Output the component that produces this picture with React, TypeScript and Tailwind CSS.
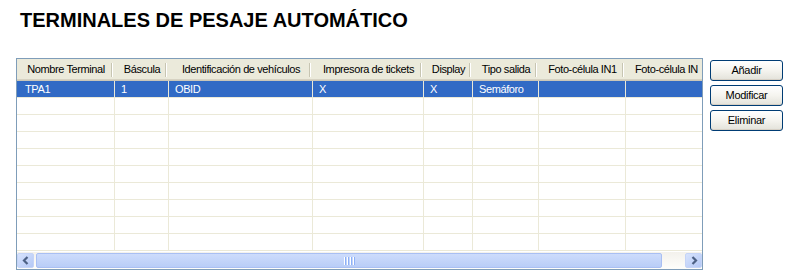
import React from "react";

const cols = [98, 54, 144, 111, 49, 66, 87, 87];
const headers = [
  "Nombre Terminal",
  "Báscula",
  "Identificación de vehículos",
  "Impresora de tickets",
  "Display",
  "Tipo salida",
  "Foto-célula IN1",
  "Foto-célula IN",
];
const firstRow = ["TPA1", "1", "OBID", "X", "X", "Semáforo", "", ""];

function Chevron({ dir }: { dir: "left" | "right" }) {
  return (
    <svg width="8" height="9" viewBox="0 0 8 9">
      {dir === "left" ? (
        <polyline points="5.5,1 2,4.5 5.5,8" fill="none" stroke="#4d6185" strokeWidth="2.2" />
      ) : (
        <polyline points="2.5,1 6,4.5 2.5,8" fill="none" stroke="#4d6185" strokeWidth="2.2" />
      )}
    </svg>
  );
}

function XPButton({ label }: { label: string }) {
  return (
    <div className="w-[73px] h-[21px] rounded-[3px] border border-[#003c74] bg-gradient-to-b from-[#ffffff] via-[#f5f4ef] to-[#e3e2da] flex items-center justify-center text-[11px] tracking-[-0.3px] text-black shadow-[inset_0_-1px_0_#d6d0c5]">
      {label}
    </div>
  );
}

export default function App() {
  const rows = Array.from({ length: 10 });
  return (
    <div
      className="w-[795px] h-[272px] bg-white overflow-hidden text-black"
      style={{ fontFamily: '"Liberation Sans", Arial, sans-serif' }}
    >
      <div className="pt-[9px] pl-[20px] text-[20px] leading-[23px] font-bold">
        TERMINALES DE PESAJE AUTOMÁTICO
      </div>
      <div className="flex mt-[26px] pl-[16px]">
        <div className="w-[687px] h-[212px] border border-[#7f9db9] flex flex-col overflow-hidden">
          {/* header */}
          <div className="flex flex-col shrink-0">
            <div className="h-[20px] bg-[#ebeadb] flex overflow-hidden">
              {headers.map((h, i) => (
                <div
                  key={i}
                  className={`relative shrink-0 flex items-center text-[11px] tracking-[-0.4px] whitespace-nowrap pt-[1px] ${
                    i === 7 ? "justify-start pl-[9px]" : "justify-center"
                  }`}
                  style={{ width: cols[i] }}
                >
                  {h}
                  {i < 7 && (
                    <div className="absolute right-[2px] top-[4px] h-[14px] w-[2px] border-l border-[#c7c5b2] border-r border-r-white" />
                  )}
                </div>
              ))}
            </div>
            <div className="h-px bg-[#d6d2c2]" />
            <div className="h-px bg-[#cbc7b8]" />
          </div>
          {/* body */}
          <div className="flex-1 overflow-hidden">
            {rows.map((_, r) => (
              <div
                key={r}
                className={`flex h-[17px] border-b border-[#ebe9d8] ${
                  r === 0 ? "bg-[#316ac5] text-white" : "bg-white"
                }`}
              >
                {cols.map((w, c) => (
                  <div
                    key={c}
                    className={`shrink-0 h-full border-r border-[#ebe9d8] flex items-center text-[11px] tracking-[-0.4px] whitespace-nowrap overflow-hidden ${
                      c === 0 ? "pl-[8px]" : "pl-[6px]"
                    }`}
                    style={{ width: w }}
                  >
                    {r === 0 ? firstRow[c] : ""}
                  </div>
                ))}
              </div>
            ))}
          </div>
          {/* scrollbar */}
          <div className="h-[17px] shrink-0 flex bg-gradient-to-b from-[#f3f1ec] to-[#fefefb] py-[1px]">
            <div className="w-[17px] h-full rounded-[2px] border border-[#c5d4f7] bg-gradient-to-br from-[#d7e3fd] to-[#b4c8f5] flex items-center justify-center">
              <Chevron dir="left" />
            </div>
            <div className="ml-[2px] w-[626px] h-full rounded-[2px] border border-[#a9bff3] bg-gradient-to-b from-[#cddcfc] to-[#b9cdf7] flex items-center justify-center gap-[1px]">
              <div className="flex gap-[1px]">
                {[0, 1, 2, 3].map((k) => (
                  <div key={k} className="w-[2px] h-[8px] border-l border-white border-r border-r-[#8cb0f8]" />
                ))}
              </div>
            </div>
            <div className="flex-1" />
            <div className="w-[17px] h-full rounded-[2px] border border-[#c5d4f7] bg-gradient-to-br from-[#d7e3fd] to-[#b4c8f5] flex items-center justify-center">
              <Chevron dir="right" />
            </div>
          </div>
        </div>
        <div className="ml-[7px] mt-[2px] flex flex-col gap-[4px]">
          <XPButton label="Añadir" />
          <XPButton label="Modificar" />
          <XPButton label="Eliminar" />
        </div>
      </div>
    </div>
  );
}
